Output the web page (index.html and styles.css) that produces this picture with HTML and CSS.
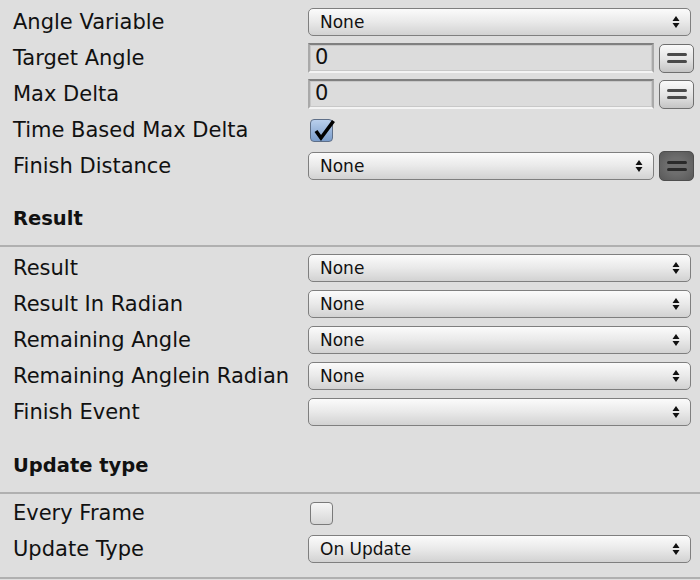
FILE: index.html
```html
<!DOCTYPE html>
<html>
<head>
<meta charset="utf-8">
<link rel="stylesheet" href="styles.css">
</head>
<body>
<div class="panel">
  <div class="row">
    <div class="label">Angle Variable</div>
    <div class="ctrl"><div class="popup"><span>None</span><svg class="arr" viewBox="0 0 8 14" width="8" height="14"><path d="M4 1 L7.5 6 H0.5 Z M4 13 L7.5 8 H0.5 Z" fill="#111"/></svg></div></div>
  </div>
  <div class="row">
    <div class="label">Target Angle</div>
    <div class="ctrl"><div class="field">0</div><div class="eqbtn"><i></i><i></i></div></div>
  </div>
  <div class="row">
    <div class="label">Max Delta</div>
    <div class="ctrl"><div class="field">0</div><div class="eqbtn"><i></i><i></i></div></div>
  </div>
  <div class="row">
    <div class="label">Time Based Max Delta</div>
    <div class="ctrl"><div class="check on"><svg viewBox="0 0 26 24" width="26" height="24"><path d="M6 12 L11 19 L23.5 2" fill="none" stroke="#000" stroke-width="3.6" stroke-linejoin="miter"/></svg></div></div>
  </div>
  <div class="row">
    <div class="label">Finish Distance</div>
    <div class="ctrl"><div class="popup short"><span>None</span><svg class="arr" viewBox="0 0 8 14" width="8" height="14"><path d="M4 1 L7.5 6 H0.5 Z M4 13 L7.5 8 H0.5 Z" fill="#111"/></svg></div><div class="eqbtn dark"><i></i><i></i></div></div>
  </div>

  <div class="header">Result</div>
  <div class="row">
    <div class="label">Result</div>
    <div class="ctrl"><div class="popup"><span>None</span><svg class="arr" viewBox="0 0 8 14" width="8" height="14"><path d="M4 1 L7.5 6 H0.5 Z M4 13 L7.5 8 H0.5 Z" fill="#111"/></svg></div></div>
  </div>
  <div class="row">
    <div class="label">Result In Radian</div>
    <div class="ctrl"><div class="popup"><span>None</span><svg class="arr" viewBox="0 0 8 14" width="8" height="14"><path d="M4 1 L7.5 6 H0.5 Z M4 13 L7.5 8 H0.5 Z" fill="#111"/></svg></div></div>
  </div>
  <div class="row">
    <div class="label">Remaining Angle</div>
    <div class="ctrl"><div class="popup"><span>None</span><svg class="arr" viewBox="0 0 8 14" width="8" height="14"><path d="M4 1 L7.5 6 H0.5 Z M4 13 L7.5 8 H0.5 Z" fill="#111"/></svg></div></div>
  </div>
  <div class="row">
    <div class="label">Remaining Anglein Radian</div>
    <div class="ctrl"><div class="popup"><span>None</span><svg class="arr" viewBox="0 0 8 14" width="8" height="14"><path d="M4 1 L7.5 6 H0.5 Z M4 13 L7.5 8 H0.5 Z" fill="#111"/></svg></div></div>
  </div>
  <div class="row">
    <div class="label">Finish Event</div>
    <div class="ctrl"><div class="popup"><span></span><svg class="arr" viewBox="0 0 8 14" width="8" height="14"><path d="M4 1 L7.5 6 H0.5 Z M4 13 L7.5 8 H0.5 Z" fill="#111"/></svg></div></div>
  </div>

  <div class="header second">Update type</div>
  <div class="row">
    <div class="label">Every Frame</div>
    <div class="ctrl"><div class="check"></div></div>
  </div>
  <div class="row">
    <div class="label">Update Type</div>
    <div class="ctrl"><div class="popup"><span>On Update</span><svg class="arr" viewBox="0 0 8 14" width="8" height="14"><path d="M4 1 L7.5 6 H0.5 Z M4 13 L7.5 8 H0.5 Z" fill="#111"/></svg></div></div>
  </div>
  <div class="endline"></div>
</div>
</body>
</html>
```
FILE: styles.css
```css
html, body {
  margin: 0;
  padding: 0;
  background: #dedede;
}
body {
  font-family: "DejaVu Sans", "Liberation Sans", sans-serif;
  color: #111;
  width: 700px;
  height: 580px;
  overflow: hidden;
}
.panel {
  padding-top: 4px;
}
.row {
  height: 36px;
  display: flex;
  align-items: center;
}
.label {
  width: 308px;
  padding-left: 13px;
  box-sizing: border-box;
  font-size: 21px;
  white-space: nowrap;
}
.ctrl {
  display: flex;
  align-items: center;
  gap: 5px;
}
.popup {
  width: 383px;
  height: 28px;
  box-sizing: border-box;
  border: 1.5px solid #7f7f7f;
  border-radius: 5px;
  background: linear-gradient(#fbfbfb, #e9e9e9 50%, #d2d2d2);
  display: flex;
  align-items: center;
  justify-content: space-between;
  padding: 0 10px 0 11px;
  font-size: 17px;
}
.popup.short {
  width: 346px;
}
.arr {
  display: block;
}
.field {
  width: 346px;
  height: 30px;
  box-sizing: border-box;
  border: 2px solid #a9a9a9;
  border-top-color: #808080;
  border-bottom-color: #f4f4f4;
  background: #dcdcdc;
  box-shadow: inset 0 0 0 1px #c8c8c8;
  font-size: 21px;
  padding-left: 5px;
  line-height: 25px;
}
.eqbtn {
  width: 35px;
  height: 29px;
  box-sizing: border-box;
  border: 1.5px solid #6f6f6f;
  border-radius: 5px;
  background: linear-gradient(#fafafa, #e2e2e2 55%, #c4c4c4);
  display: flex;
  flex-direction: column;
  align-items: center;
  justify-content: center;
  gap: 4px;
}
.eqbtn i {
  display: block;
  width: 20px;
  height: 3px;
  border-radius: 2px;
  background: #4a4a4a;
}
.eqbtn.dark {
  height: 30px;
  border-color: #4e4e4e;
  background: radial-gradient(ellipse at center, #6e6e6e 40%, #585858);
}
.eqbtn.dark i {
  background: #2a2a2a;
}
.check {
  margin-left: 2px;
  width: 23px;
  height: 23px;
  box-sizing: border-box;
  border: 1.5px solid #7a7a7a;
  border-radius: 4px;
  background: linear-gradient(#f6f6f6, #d6d6d6);
  position: relative;
}
.check.on {
  background: linear-gradient(#b9cfec, #7b9dcb);
  border-color: #5e6f88;
}
.check.on svg {
  position: absolute;
  left: -1px;
  top: -1px;
}
.header {
  font-weight: bold;
  font-size: 19.5px;
  padding: 23px 0 14px 13px;
  line-height: 24px;
  border-bottom: 2px solid #b0b0b0;
  margin-bottom: 3px;
}
.header.second {
  padding-top: 24px;
  margin-bottom: 1px;
}
.endline {
  margin-top: 10px;
  border-bottom: 2px solid #b0b0b0;
}
```
